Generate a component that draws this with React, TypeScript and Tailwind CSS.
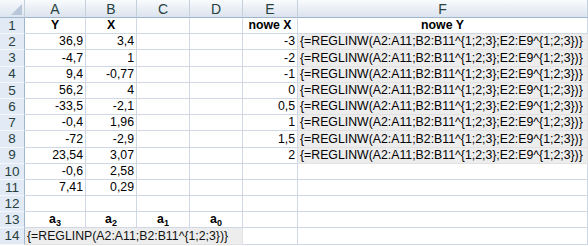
import React from 'react';

const cols = ['A', 'B', 'C', 'D', 'E', 'F'];

const formulaY = '{=REGLINW(A2:A11;B2:B11^{1;2;3};E2:E9^{1;2;3})}';

// rows 2..11: Y, X, nowe X
const data: [string, string, string?][] = [
  ['36,9', '3,4', '-3'],
  ['-4,7', '1', '-2'],
  ['9,4', '-0,77', '-1'],
  ['56,2', '4', '0'],
  ['-33,5', '-2,1', '0,5'],
  ['-0,4', '1,96', '1'],
  ['-72', '-2,9', '1,5'],
  ['23,54', '3,07', '2'],
  ['-0,6', '2,58'],
  ['7,41', '0,29'],
];

function RowHead({ n }: { n: number }) {
  return (
    <div className="flex items-center justify-center border-r border-b border-r-[#9eb6ce] border-b-[#f4f7fb] bg-[#e2eaf5] text-[13.5px] leading-none text-[#27413e]">
      {n}
    </div>
  );
}

function Cell({ children, align = 'right', bold, gray }: { children?: React.ReactNode; align?: 'right' | 'center' | 'left'; bold?: boolean; gray?: boolean }) {
  return (
    <div
      className={
        'flex items-end overflow-visible whitespace-nowrap border-r border-b px-[2px] pb-[1px] text-[12.3px] leading-[14px] text-black ' +
        (align === 'right' ? 'justify-end ' : align === 'center' ? 'justify-center ' : 'justify-start ') +
        (bold ? 'font-bold ' : '') +
        (gray ? 'border-[#e2e2e2] bg-[#ededed] text-[#111] ' : 'border-[#d0d7e5] bg-white ')
      }
    >
      {children}
    </div>
  );
}

function Sub({ c, i }: { c: string; i: number }) {
  return (
    <span>
      {c}
      <sub className="text-[9px] leading-none">{i}</sub>
    </span>
  );
}

export default function App() {
  return (
    <div className="h-[246px] w-[588px] overflow-hidden bg-white" style={{ fontFamily: '"Liberation Sans", Arial, sans-serif' }}>
      <div className="grid grid-cols-[25px_61px_51px_53px_53px_55px_290px] grid-rows-[18px_repeat(14,16.2px)]">
        {/* corner */}
        <div className="relative border-r border-b border-r-[#c5d0dd] border-b-[#9eb6ce] bg-gradient-to-b from-[#f7f9fc] to-[#dde5ef]">
          <svg className="absolute right-[2px] bottom-[2px]" width="11" height="11" viewBox="0 0 11 11">
            <polygon points="11,0 11,11 0,11" fill="#b7c6d9" />
          </svg>
        </div>
        {cols.map((c) => (
          <div
            key={c}
            className="flex items-center justify-center border-r border-b border-r-[#c5d0dd] border-b-[#9eb6ce] bg-gradient-to-b from-[#f9fbfd] to-[#dbe3ee] text-[14px] leading-none text-[#27413e]"
          >
            {c}
          </div>
        ))}

        {/* row 1 */}
        <RowHead n={1} />
        <Cell align="center" bold>Y</Cell>
        <Cell align="center" bold>X</Cell>
        <Cell />
        <Cell />
        <Cell align="center" bold>nowe X</Cell>
        <Cell align="center" bold>nowe Y</Cell>

        {data.map((r, i) => (
          <React.Fragment key={i}>
            <RowHead n={i + 2} />
            <Cell>{r[0]}</Cell>
            <Cell>{r[1]}</Cell>
            <Cell />
            <Cell />
            <Cell>{r[2]}</Cell>
            {r[2] !== undefined ? <Cell align="left" gray>{formulaY}</Cell> : <Cell />}
          </React.Fragment>
        ))}

        {/* row 12 */}
        <RowHead n={12} />
        <Cell />
        <Cell />
        <Cell />
        <Cell />
        <Cell />
        <Cell />

        {/* row 13 */}
        <RowHead n={13} />
        <Cell align="center" bold><Sub c="a" i={3} /></Cell>
        <Cell align="center" bold><Sub c="a" i={2} /></Cell>
        <Cell align="center" bold><Sub c="a" i={1} /></Cell>
        <Cell align="center" bold><Sub c="a" i={0} /></Cell>
        <Cell />
        <Cell />

        {/* row 14 */}
        <RowHead n={14} />
        <div className="col-span-4 flex items-end whitespace-nowrap border-r border-b border-[#e2e2e2] bg-[#ededed] px-[2px] pb-[1px] text-[12.3px] leading-[14px] text-[#111]">
          {'{=REGLINP(A2:A11;B2:B11^{1;2;3})}'}
        </div>
        <Cell />
        <Cell />
      </div>
    </div>
  );
}
